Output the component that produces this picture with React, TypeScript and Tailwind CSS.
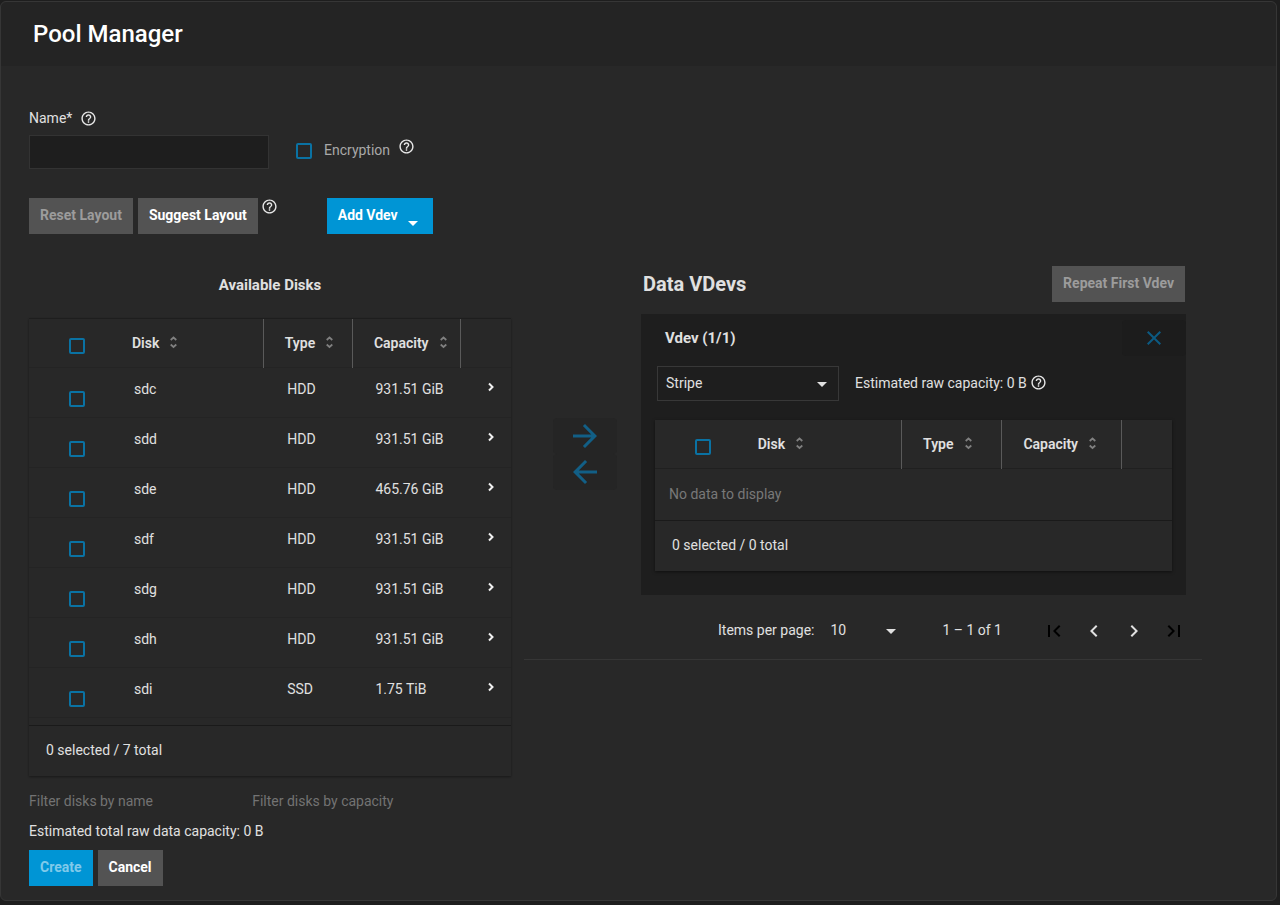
import { useId, useState, type ReactNode } from "react";
import {
  MdArrowBack,
  MdArrowDropDown,
  MdArrowForward,
  MdChevronLeft,
  MdChevronRight,
  MdClose,
  MdFirstPage,
  MdHelpOutline,
  MdLastPage,
} from "react-icons/md";

type Disk = { name: string; type: string; capacity: string };

const DISKS: Disk[] = [
  { name: "sdc", type: "HDD", capacity: "931.51 GiB" },
  { name: "sdd", type: "HDD", capacity: "931.51 GiB" },
  { name: "sde", type: "HDD", capacity: "465.76 GiB" },
  { name: "sdf", type: "HDD", capacity: "931.51 GiB" },
  { name: "sdg", type: "HDD", capacity: "931.51 GiB" },
  { name: "sdh", type: "HDD", capacity: "931.51 GiB" },
  { name: "sdi", type: "SSD", capacity: "1.75 TiB" },
];

function CheckBox({ label, id }: { label?: string; id?: string }) {
  return (
    <input
      id={id}
      type="checkbox"
      aria-label={label}
      className="block size-4 shrink-0 appearance-none rounded-[2px] border-2 border-[#0a72a3] checked:bg-[#0095d5]"
    />
  );
}

function Help({ label }: { label: string }) {
  return (
    <button type="button" aria-label={label} className="block shrink-0 text-[#e8e8e8]">
      <MdHelpOutline size={17} />
    </button>
  );
}

function Button({
  children,
  primary = false,
  disabled = false,
}: {
  children: ReactNode;
  primary?: boolean;
  disabled?: boolean;
}) {
  const background = primary ? "bg-[#0095d5]" : "bg-[#535353]";
  const color = disabled ? (primary ? "text-[#80caea]" : "text-[#9c9c9c]") : "text-white";
  return (
    <button
      type="button"
      disabled={disabled}
      className={`flex h-9 shrink-0 items-center px-[11px] pb-0.5 font-bold whitespace-nowrap ${background} ${color}`}
    >
      {children}
    </button>
  );
}

function SortIcon() {
  return (
    <svg width="9" height="13" viewBox="0 0 9 13" fill="none" stroke="#808080" strokeWidth="1.7" aria-hidden="true">
      <path d="M1.7 4 4.5 1.5 7.3 4M1.7 8.5l2.8 2.5 2.8-2.5" />
    </svg>
  );
}

function SortHeader({ children, divided = true }: { children: string; divided?: boolean }) {
  return (
    <th scope="col" className={`h-12 pl-[21px] text-left font-semibold ${divided ? "border-l border-[#5a5a5a]" : ""}`}>
      <button type="button" className="flex items-center gap-2.5">
        {children}
        <SortIcon />
      </button>
    </th>
  );
}

function DiskHeader({ label }: { label: string }) {
  return (
    <thead>
      <tr>
        <th scope="col" className="h-12 pt-1.5 pl-10">
          <CheckBox label={label} />
        </th>
        <SortHeader divided={false}>Disk</SortHeader>
        <SortHeader>Type</SortHeader>
        <SortHeader>Capacity</SortHeader>
        <th scope="col" aria-label="Details" className="border-l border-[#5a5a5a]" />
      </tr>
    </thead>
  );
}

function AvailableDisks() {
  return (
    <section>
      <h2 className="mt-4 text-center text-[15px] leading-5 font-bold">Available Disks</h2>
      <div className="mt-[23px] border-t border-[#1e1e1e] shadow-[0_1px_2px_rgba(0,0,0,0.4)]">
        <table className="w-full table-fixed border-collapse">
          <colgroup>
            <col className="w-[17%]" />
            <col className="w-[31.6%]" />
            <col className="w-[18.5%]" />
            <col className="w-[22.4%]" />
            <col />
          </colgroup>
          <DiskHeader label="Select all disks" />
          <tbody>
            {DISKS.map((disk) => (
              <tr key={disk.name} className="h-[50px] border-y border-[#242424] align-top leading-5">
                <td className="pt-[23px] pl-10">
                  <CheckBox label={`Select ${disk.name}`} />
                </td>
                <td className="pt-[11px] pl-[23px]">{disk.name}</td>
                <td className="pt-[11px] pl-6">{disk.type}</td>
                <td className="pt-[11px] pl-[23px]">{disk.capacity}</td>
                <td className="pt-[14px] pl-[27px]">
                  <button type="button" aria-label={`Show details of ${disk.name}`} className="block">
                    <svg width="8" height="10" viewBox="0 0 8 10" fill="none" stroke="#f0f0f0" strokeWidth="2">
                      <path d="M2 1.5 5.5 5 2 8.5" />
                    </svg>
                  </button>
                </td>
              </tr>
            ))}
          </tbody>
        </table>
        <p className="mt-[7px] border-t border-[#1a1a1a] px-[17px] pt-[14px] pb-4 leading-5">0 selected / 7 total</p>
      </div>
      <div className="mt-[15px] flex">
        <input
          aria-label="Filter disks by name"
          placeholder="Filter disks by name"
          className="h-5 w-[46.3%] bg-transparent placeholder:text-[#737373]"
        />
        <input
          aria-label="Filter disks by capacity"
          placeholder="Filter disks by capacity"
          className="h-5 flex-1 bg-transparent placeholder:text-[#737373]"
        />
      </div>
    </section>
  );
}

function MoveButtons() {
  return (
    <div className="flex flex-col items-center pt-[152px] pl-1 text-[#125f86]">
      <button type="button" disabled aria-label="Add to vdev" className="flex h-9 w-16 items-center justify-center rounded bg-[#252525]">
        <MdArrowForward size={36} />
      </button>
      <button type="button" disabled aria-label="Remove from vdev" className="flex h-9 w-16 items-center justify-center rounded bg-[#252525]">
        <MdArrowBack size={36} />
      </button>
    </div>
  );
}

function VdevPanel() {
  return (
    <div className="mt-3 bg-[#1e1e1e] pt-1.5 pb-6">
      <div className="flex items-center justify-between pl-6">
        <h3 className="pt-0.5 text-[15px] font-bold">Vdev (1/1)</h3>
        <button type="button" disabled aria-label="Remove vdev" className="flex h-9 w-16 items-center justify-center rounded bg-[#1c1c1c] text-[#0c5a82]">
          <MdClose size={24} />
        </button>
      </div>
      <div className="mt-2.5 flex items-center gap-4 px-4">
        <div className="grid w-[182px] items-center">
          <select
            aria-label="Vdev layout"
            className="col-start-1 row-start-1 h-[35px] appearance-none border border-[#383838] bg-transparent pr-8 pb-0.5 pl-2"
          >
            <option>Stripe</option>
          </select>
          <MdArrowDropDown size={24} className="pointer-events-none col-start-1 row-start-1 mr-[5px] justify-self-end" />
        </div>
        <div className="flex items-center gap-[3px] pb-0.5">
          <span>Estimated raw capacity: 0 B</span>
          <Help label="About estimated raw capacity" />
        </div>
      </div>
      <div className="mx-3.5 mt-[19px] bg-[#282828] shadow-[0_1px_3px_rgba(0,0,0,0.5)]">
        <table className="w-full table-fixed border-collapse">
          <colgroup>
            <col className="w-[15.8%]" />
            <col className="w-[31.9%]" />
            <col className="w-[19.4%]" />
            <col className="w-[23.2%]" />
            <col />
          </colgroup>
          <DiskHeader label="Select all vdev disks" />
          <tbody>
            <tr className="border-t border-[#202020]">
              <td colSpan={5} className="h-[52px] pl-3.5 text-[#787878]">
                No data to display
              </td>
            </tr>
          </tbody>
        </table>
        <p className="border-t border-[#1a1a1a] px-[17px] pt-[14px] pb-4 leading-5">0 selected / 0 total</p>
      </div>
    </div>
  );
}

function Paginator() {
  const id = useId();
  return (
    <div className="flex items-center justify-end pt-4 pb-2 leading-5">
      <label htmlFor={id} className="pb-0.5">
        Items per page:
      </label>
      <div className="ml-3 grid w-[77px] items-center">
        <select id={id} className="col-start-1 row-start-1 appearance-none bg-transparent pb-0.5 pl-1">
          <option>10</option>
        </select>
        <MdArrowDropDown size={24} className="pointer-events-none col-start-1 row-start-1 justify-self-end" />
      </div>
      <span className="mr-8 ml-[39px] pb-0.5">1 – 1 of 1</span>
      <button type="button" disabled aria-label="First page" className="flex size-10 items-center justify-center text-black">
        <MdFirstPage size={24} />
      </button>
      <button type="button" aria-label="Previous page" className="flex size-10 items-center justify-center">
        <MdChevronLeft size={24} />
      </button>
      <button type="button" aria-label="Next page" className="flex size-10 items-center justify-center">
        <MdChevronRight size={24} />
      </button>
      <button type="button" disabled aria-label="Last page" className="-mr-2 flex size-10 items-center justify-center text-black">
        <MdLastPage size={24} />
      </button>
    </div>
  );
}

export default function App() {
  const [name, setName] = useState("");
  return (
    <div className="min-h-screen bg-[#1e1e1e] pt-px pr-[3px] font-[Roboto,sans-serif] text-sm text-[#e0e0e0]">
      <main className="rounded-md border border-[#363636] bg-[#282828]">
        <header className="rounded-t-md bg-[#242424] px-8 py-4">
          <h1 className="text-2xl font-medium text-white">Pool Manager</h1>
        </header>
        <form className="pt-[42px] pr-[74px] pb-[14px] pl-7">
          <div className="flex">
            <div className="w-60">
              <div className="flex items-center gap-2 leading-5">
                <label htmlFor="pool-name">Name*</label>
                <Help label="About the name" />
              </div>
              <input
                id="pool-name"
                required
                value={name}
                onChange={(event) => setName(event.target.value)}
                className="mt-[7px] block h-[34px] w-full border border-[#333333] bg-[#1e1e1e] px-2"
              />
            </div>
            <div className="ml-[27px] flex items-center gap-3 pt-6 text-[#a9a9a9]">
              <CheckBox id="encryption" />
              <label htmlFor="encryption" className="pb-0.5">
                Encryption
              </label>
              <div className="-ml-1 pb-2">
                <Help label="About encryption" />
              </div>
            </div>
          </div>

          <div className="mt-[29px] flex items-start">
            <div className="flex items-start">
              <div className="flex gap-[5px]">
                <Button disabled>Reset Layout</Button>
                <Button>Suggest Layout</Button>
              </div>
              <div className="ml-[3px]">
                <Help label="About layouts" />
              </div>
            </div>
            <div className="ml-[49px]">
              <Button primary>
                Add Vdev
                <MdArrowDropDown size={24} className="mt-4 -mr-[3px] ml-[3px]" />
              </Button>
            </div>
          </div>

          <div className="mt-8 grid grid-cols-[482fr_678fr] items-start gap-[13px]">
            <div className="-mt-[7px]">
              <AvailableDisks />
            </div>
            <div className="grid grid-cols-[117px_1fr] border-b border-[#363636] pr-4">
              <MoveButtons />
              <section>
                <div className="flex items-center justify-between pr-px pl-0.5">
                  <h2 className="text-xl font-bold">Data VDevs</h2>
                  <Button disabled>Repeat First Vdev</Button>
                </div>
                <VdevPanel />
                <Paginator />
              </section>
            </div>
          </div>

          <p className="mt-2.5 leading-5">Estimated total raw data capacity: 0 B</p>
          <div className="mt-[9px] flex gap-[5px]">
            <Button primary disabled>
              Create
            </Button>
            <Button>Cancel</Button>
          </div>
        </form>
      </main>
    </div>
  );
}
